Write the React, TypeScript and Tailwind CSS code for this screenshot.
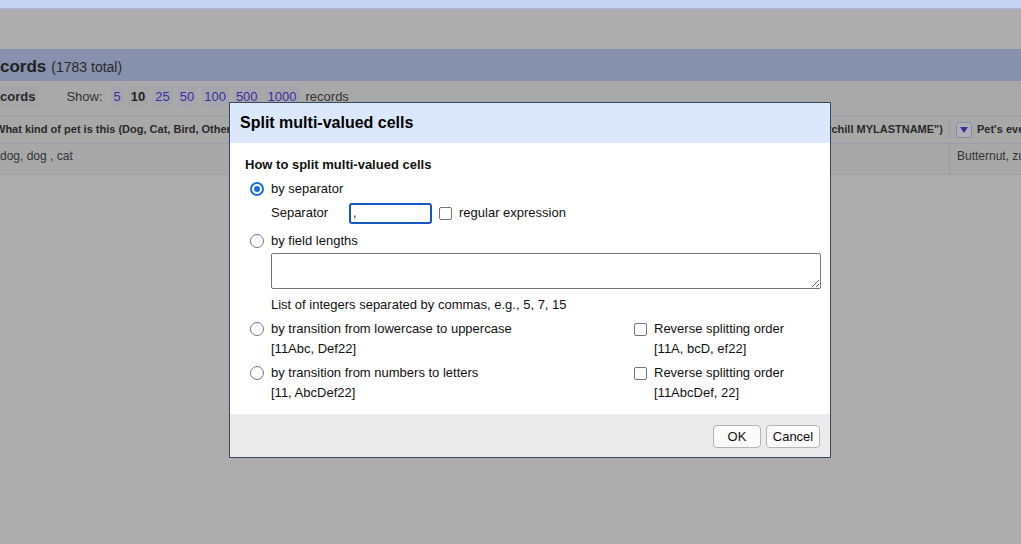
import * as React from "react";

const Radio = ({ checked = false }: { checked?: boolean }) =>
  checked ? (
    <span className="flex h-[14px] w-[14px] shrink-0 items-center justify-center rounded-full border-2 border-[#1a6fe8] bg-white">
      <span className="block h-[6px] w-[6px] rounded-full bg-[#1a6fe8]" />
    </span>
  ) : (
    <span className="block h-[14px] w-[14px] shrink-0 rounded-full border border-[#767676] bg-white" />
  );

const Checkbox = () => (
  <span className="block h-[13px] w-[13px] shrink-0 rounded-[2px] border border-[#767676] bg-white" />
);

const PageSizes = ["5", "10", "25", "50", "100", "500", "1000"];

function Background() {
  return (
    <div className="flex h-[544px] w-[1021px] flex-col overflow-hidden bg-[#adadad] text-[#222]">
      <div className="h-[9px] shrink-0 border-b border-[#a9b8d6] bg-[#c5d5f1]" />
      <div className="h-[40px] shrink-0" />
      <div className="flex h-[32px] shrink-0 items-center bg-[#8790ac] pt-[3px]">
        <span className="text-[17px] font-bold text-[#222]">cords</span>
        <span className="ml-[5px] pt-[2px] text-[14px] text-[#2a2a2a]">(1783 total)</span>
      </div>
      <div className="flex h-[34px] shrink-0 items-center bg-[#a9a9a9] pb-[2px] text-[13px]">
        <span className="rounded-[3px] bg-[#a5a5a7] pr-[4px] font-bold text-[#2a2a2a]">cords</span>
        <span className="ml-[27px] text-[#333]">Show:</span>
        <div className="ml-[8px] flex items-center gap-[4px]">
          {PageSizes.map((n) => (
            <span
              key={n}
              className={
                n === "10"
                  ? "rounded-[3px] bg-[#a5a5a7] px-[3px] font-bold text-[#222]"
                  : "rounded-[3px] bg-[#a5a5ad] px-[3px] text-[#3a2f9e]"
              }
            >
              {n}
            </span>
          ))}
        </div>
        <span className="ml-[6px] text-[#333]">records</span>
      </div>
      <div className="flex h-[29px] shrink-0 items-center border-y border-[#9c9cae] bg-[#a8a8a8] text-[11px] font-bold text-[#2a2a2a]">
        <div className="flex w-[950px] shrink-0 items-center justify-between border-r border-[#9a9aa4] pr-[6px]">
          <span className="-ml-[5px] whitespace-nowrap">What kind of pet is this (Dog, Cat, Bird, Other, etc.)</span>
          <span className="whitespace-nowrap">Name (e.g. "Winston Churchill MYLASTNAME")</span>
        </div>
        <span className="ml-[6px] flex h-[16px] w-[16px] shrink-0 items-center justify-center rounded-[3px] border border-[#8a8aa8] bg-[#b0b0b6]">
          <svg width="8" height="6" viewBox="0 0 8 6">
            <path d="M0 0h8L4 6z" fill="#3a2f9e" />
          </svg>
        </span>
        <span className="ml-[5px] whitespace-nowrap">Pet's everyday name</span>
      </div>
      <div className="flex h-[31px] shrink-0 border-b border-dotted border-[#9a9a9a] bg-[#a8a8a8] text-[12px] text-[#333]">
        <div className="w-[950px] shrink-0 border-r border-[#9a9aa4] pt-[3px]">dog, dog , cat</div>
        <div className="whitespace-nowrap pl-[7px] pt-[3px]">Butternut, zuzu</div>
      </div>
    </div>
  );
}

function SplitDialog() {
  return (
    <div className="absolute left-[229px] top-[102px] w-[602px] border border-[#37475d] bg-white text-[13px] text-[#111]">
      <div className="flex h-[40px] items-center bg-[#dbe8fb] pl-[10px] text-[16px] font-bold text-black">
        Split multi-valued cells
      </div>
      <div className="pb-[11px] pl-[15px] pr-[9px] pt-[12px]">
        <div className="flex h-[20px] items-center font-bold">How to split multi-valued cells</div>

        <div className="mt-[4px] flex h-[20px] items-center">
          <span className="ml-[5px] mr-[7px]"><Radio checked /></span>
          by separator
        </div>
        <div className="mt-[3px] flex h-[22px] items-center pl-[26px]">
          <span className="w-[78px]">Separator</span>
          <span className="flex h-[21px] w-[83px] items-center rounded-[3px] border-2 border-[#1656c4] pl-[2px] text-[12px] leading-none">
            ,
          </span>
          <span className="ml-[7px] mr-[7px]"><Checkbox /></span>
          regular expression
        </div>

        <div className="mt-[7px] flex h-[20px] items-center">
          <span className="ml-[5px] mr-[7px]"><Radio /></span>
          by field lengths
        </div>
        <div className="mt-[2px] pl-[26px]">
          <textarea
            className="block h-[36px] w-[550px] resize-y rounded-[2px] border border-[#767676] bg-white"
            defaultValue=""
          />
        </div>
        <div className="mt-[6px] flex h-[20px] items-center pl-[26px]">
          List of integers separated by commas, e.g., 5, 7, 15
        </div>

        <div className="mt-[4px] flex">
          <div className="w-[389px] shrink-0">
            <div className="flex h-[20px] items-center">
              <span className="ml-[5px] mr-[7px]"><Radio /></span>
              by transition from lowercase to uppercase
            </div>
            <div className="flex h-[20px] items-center pl-[26px]">[11Abc, Def22]</div>
          </div>
          <div>
            <div className="flex h-[20px] items-center">
              <span className="mr-[7px]"><Checkbox /></span>
              Reverse splitting order
            </div>
            <div className="flex h-[20px] items-center pl-[20px]">[11A, bcD, ef22]</div>
          </div>
        </div>

        <div className="mt-[4px] flex">
          <div className="w-[389px] shrink-0">
            <div className="flex h-[20px] items-center">
              <span className="ml-[5px] mr-[7px]"><Radio /></span>
              by transition from numbers to letters
            </div>
            <div className="flex h-[20px] items-center pl-[26px]">[11, AbcDef22]</div>
          </div>
          <div>
            <div className="flex h-[20px] items-center">
              <span className="mr-[7px]"><Checkbox /></span>
              Reverse splitting order
            </div>
            <div className="flex h-[20px] items-center pl-[20px]">[11AbcDef, 22]</div>
          </div>
        </div>
      </div>
      <div className="flex justify-end gap-[5px] bg-[#ebebeb] pb-[9px] pr-[10px] pt-[11px]">
        <button className="h-[23px] w-[48px] rounded-[4px] border border-[#b4b4b4] bg-[#fafafa] text-[13px] text-[#111]">
          OK
        </button>
        <button className="h-[23px] w-[54px] rounded-[4px] border border-[#b4b4b4] bg-[#fafafa] text-[13px] text-[#111]">
          Cancel
        </button>
      </div>
    </div>
  );
}

export default function App() {
  return (
    <div className="relative h-[544px] w-[1021px] overflow-hidden font-['Liberation_Sans',Arial,sans-serif]">
      <Background />
      <SplitDialog />
    </div>
  );
}
